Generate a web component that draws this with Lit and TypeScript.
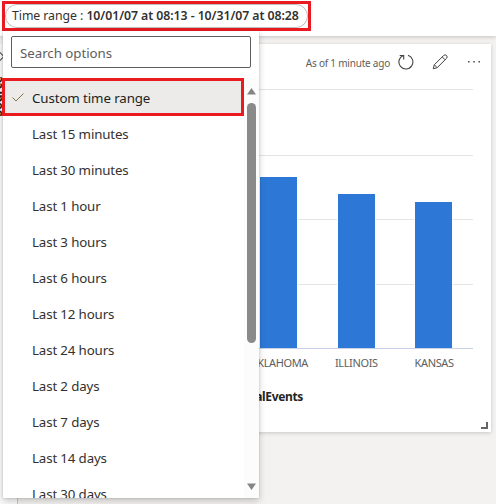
import { LitElement, html, css } from "lit";
import { customElement } from "lit/decorators.js";
import { styleMap } from "lit/directives/style-map.js";

const OPTIONS = [
  "Last 15 minutes", "Last 30 minutes", "Last 1 hour", "Last 3 hours", "Last 6 hours",
  "Last 12 hours", "Last 24 hours", "Last 2 days", "Last 7 days", "Last 14 days", "Last 30 days",
];

const BARS = [
  { name: "OKLAHOMA", value: 171 },
  { name: "ILLINOIS", value: 154 },
  { name: "KANSAS", value: 146 },
];

@customElement("time-menu")
export class TimeMenu extends LitElement {
  static styles = css`
    :host { display: flex; flex-direction: column; box-sizing: border-box; width: 256px; height: 467px; background: #fff; box-shadow: 0 3px 7px rgba(0,0,0,.2), 0 0 2px rgba(0,0,0,.16); overflow: hidden; color: #323130; font-size: 13.3px; }
    .search { flex: none; box-sizing: border-box; width: 240px; height: 32px; margin: 5px 8px 10px; padding: 0 8px; border: 1px solid #605e5c; border-radius: 2px; line-height: 32px; color: #605e5c; letter-spacing: -.04px; }
    .body { flex: 1; display: flex; min-height: 0; }
    .list { flex: 1; overflow: hidden; }
    .item { height: 36px; line-height: 39px; padding-left: 29px; white-space: nowrap; letter-spacing: -.14px; }
    .selected { display: flex; box-sizing: border-box; width: 242px; height: 38px; margin: 0 0 -1px -1px; padding: 0 0 0 7px; border: 3px solid #ea1b20; background: #edebe9; line-height: 35px; color: #201f1e; letter-spacing: -.1px; white-space: nowrap; }
    .check { width: 12px; height: 12px; margin: 10px 8px 0 0; flex: none; }
    .rail { width: 15px; flex: none; display: flex; flex-direction: column; align-items: center; background: #fcfcfc; }
    .thumb { width: 9px; height: 240px; margin-top: 8px; border-radius: 5px; background: #8a8a8a; flex: none; }
    .up, .down { width: 9px; height: 7px; flex: none; }
    .up { margin-top: 10px; }
    .down { margin-top: 140px; }
  `;
  render() {
    return html`
      <div class="search">Search options</div>
      <div class="body">
        <div class="list">
          <div class="selected">
            <svg class="check" viewBox="0 0 12 12" fill="none" stroke="#847545"><path d="M.5 6.5 4 10 11.5 2.5" /></svg>
            <span>Custom time range</span>
          </div>
          ${OPTIONS.map((o) => html`<div class="item">${o}</div>`)}
        </div>
        <div class="rail">
          <svg class="up" viewBox="0 0 9 7"><path d="M4.5 0 9 6.5H0Z" fill="#858585" /></svg>
          <div class="thumb"></div>
          <svg class="down" viewBox="0 0 9 7"><path d="M0 .5H9L4.5 7Z" fill="#858585" /></svg>
        </div>
      </div>`;
  }
}

@customElement("chart-card")
export class ChartCard extends LitElement {
  static styles = css`
    :host { display: flex; flex-direction: column; box-sizing: border-box; height: 388px; background: #fff; box-shadow: 0 1px 4px rgba(0,0,0,.18); color: #605e5c; }
    .head { display: flex; align-items: center; justify-content: flex-end; height: 36px; padding-right: 9px; }
    .asof { font-size: 10px; letter-spacing: -.22px; margin: 1px 8px 0 0; white-space: nowrap; color: #605e5c; }
    .icon { width: 16px; height: 16px; flex: none; }
    .pencil { margin: 0 18px; }
    .plot { display: flex; gap: 38.5px; height: 260px; margin: 9px 18px 0 0; padding-right: 20px; box-sizing: border-box; justify-content: flex-end; align-items: flex-end; border-bottom: 1px solid #c8d0e8;
      background: linear-gradient(#e4e4e4 1px, transparent 1px) 0 0/100% 66px no-repeat, linear-gradient(#e4e4e4 1px, transparent 1px) 0 66px/100% 2px no-repeat, linear-gradient(#e4e4e4 1px, transparent 1px) 0 130px/100% 2px no-repeat, linear-gradient(#e4e4e4 1px, transparent 1px) 0 195px/100% 2px no-repeat; }
    .bar { width: 37px; border: solid #fff; border-width: 1px 1px 0; background: #2d78d6; }
    .labels { display: flex; justify-content: flex-end; height: 16px; margin: 6px 18px 0 0; font-size: 11px; line-height: 16px; letter-spacing: -.36px; }
    .label { width: 77.8px; text-align: center; }
    .legend { margin: 17px 0 0 0; width: 285px; text-align: right; font-size: 12px; line-height: 18px; font-weight: 700; color: #252423; letter-spacing: -.35px; }
    .grip { width: 5px; height: 5px; margin: auto 3px 3px auto; border: solid #666; border-width: 0 2px 2px 0; }
  `;
  render() {
    return html`
      <div class="head">
        <span class="asof">As of 1 minute ago</span>
        <svg class="icon" viewBox="0 0 16 16" fill="none" stroke="#444" stroke-width="1.1"><path d="M10 1.3a7 7 0 1 1-4.8.2M1.7 1.5h4v4" /></svg>
        <svg class="icon pencil" viewBox="0 0 16 16" fill="none" stroke="#444" stroke-width="1"><path d="M1.2 14.8 2.3 10.8 11.6 1.5a1.9 1.9 0 0 1 2.9 2.9L5.2 13.7ZM2.3 10.8l2.9 2.9M10.2 2.9l2.9 2.9" /></svg>
        <svg class="icon" viewBox="0 0 16 16" fill="#555"><path d="M2 7h1.6v1.6H2zm5.2 0h1.6v1.6H7.2zm5.2 0H14v1.6h-1.6z" /></svg>
      </div>
      <div class="plot">${BARS.map((b) => html`<div class="bar" style=${styleMap({ height: `${b.value}px` })}></div>`)}</div>
      <div class="labels">${BARS.map((b) => html`<span class="label">${b.name}</span>`)}</div>
      <div class="legend">TotalEvents</div>
      <div class="grip"></div>`;
  }
}

@customElement("app-root")
export class AppRoot extends LitElement {
  static styles = css`
    :host { display: block; position: relative; width: 496px; height: 504px; overflow: hidden; background: #f3f2f1; font-family: "Noto Sans", "Open Sans", sans-serif; }
    .top { height: 36px; background: #fff; box-shadow: 0 1px 4px rgba(0,0,0,.2); padding: 1px 0 0 2px; box-sizing: border-box; }
    .range { box-sizing: border-box; width: 309px; height: 30px; border: 3px solid #ea1b20; }
    .pill { box-sizing: border-box; height: 24px; border: 1px solid #bdbdbd; border-radius: 12px; padding-left: 6px; font-size: 12.3px; line-height: 21px; white-space: nowrap; color: #323130; letter-spacing: -.06px; }
    .pill b { font-weight: 600; }
    .side { position: absolute; left: 0; top: 44px; width: 17px; height: 460px; background: #fafafa; border-right: 1px solid #c8c8c8; }
    .hint { position: absolute; left: -6px; top: 51px; width: 10px; height: 11px; }
    .vert { position: absolute; left: -9px; top: 76px; writing-mode: vertical-rl; transform: rotate(180deg); font-size: 12px; font-weight: 700; line-height: 14px; color: #252423; }
    chart-card { margin: 8px 5px 0 18px; }
    time-menu { position: absolute; left: 3px; top: 31px; }
    .over { position: absolute; left: 2px; top: 78px; width: 2px; height: 38px; background: #ea1b20; }
  `;
  render() {
    return html`
      <div class="top"><div class="range"><div class="pill">Time range : <b>10/01/07 at 08:13 - 10/31/07 at 08:28</b></div></div></div>
      <chart-card></chart-card>
      <div class="side"></div>
      <svg class="hint" viewBox="0 0 9 9"><path d="M4.5 0 9 4.5 4.5 9" fill="none" stroke="#555" /></svg>
      <div class="vert">Source</div>
      <time-menu></time-menu>
      <div class="over"></div>`;
  }
}
